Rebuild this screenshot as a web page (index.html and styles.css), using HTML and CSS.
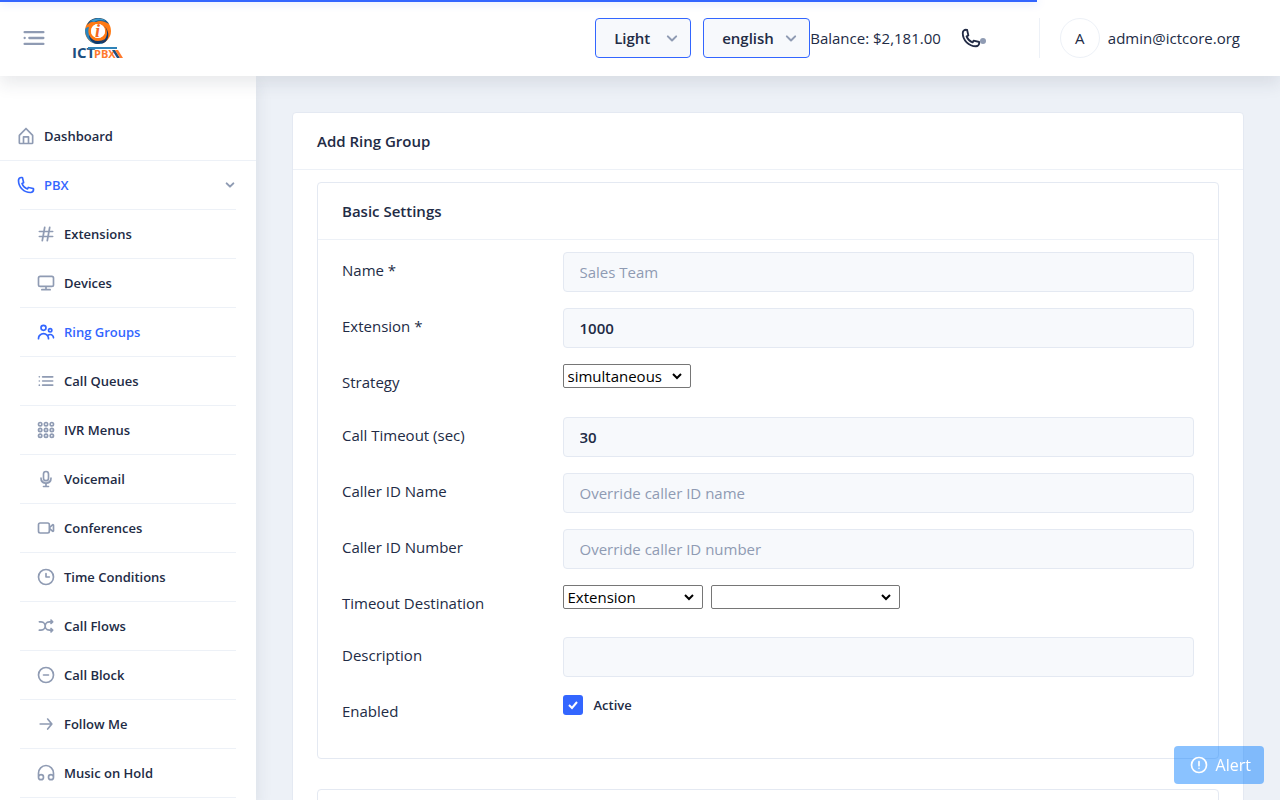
FILE: index.html
```html
<!doctype html>
<html lang="en">
<head>
  <meta charset="UTF-8">
  <meta name="viewport" content="width=device-width, initial-scale=1.0">
  <title>ICTPBX - Add Ring Group</title>
  <link rel="stylesheet" href="styles.css">
</head>
<body>
  <div class="progress"></div>
  <header class="header">
    <button class="toggle" type="button" aria-label="Toggle menu">
      <svg viewBox="0 0 24 24"><circle cx="4" cy="12" r="1"/><rect x="7" y="11" width="14" height="2" rx=".94"/><rect x="3" y="16" width="18" height="2" rx=".94"/><rect x="3" y="6" width="18" height="2" rx=".94"/></svg>
    </button>
    <a class="logo" href="#" aria-label="ICTPBX">
      <svg viewBox="0 0 52 40">
        <circle cx="25" cy="13" r="10" fill="none" stroke="#ff7a14" stroke-width="6"/>
        <path d="M14 7C16 2 20 0 25 0c5 0 9 2 11 6-5-3-9-4-13-2-4-1-6 0-9 3z" fill="#1d5b8c"/>
        <path d="M16 4c5-4 12-5 17-1-5-1-9-1-12 1-2-1-4-1-5 0z" fill="#3f9bcd"/>
        <path d="M29 6c3 2 5 5 5 9 0 5-4 9-9 11 4 0 7-1 9-4 3-5 1-12-5-16z" fill="#123a6b"/>
        <path d="M12 12c0 8 6 14 13 14 2 0 4 0 5-1-6 0-10-2-13-6-2-3-2-7-1-10-2 0-4 1-4 3z" fill="#2b85bd"/>
        <path d="M16 17c2 4 5 6 9 6 3 0 5-1 7-2-2 3-5 5-8 5-5-1-8-5-8-9z" fill="#123a6b"/>
        <circle cx="25" cy="13" r="7" fill="#fff"/>
        <text class="logo-i" x="22" y="19">i</text>
        <text class="logo-ict" x="-1" y="40">ICT</text>
        <path d="M15 29h29v2H15z" fill="#2f83b8"/>
        <text class="logo-pbx" x="21" y="40">PBX</text>
        <path d="M39 32h3l5 8h-3z" fill="#1d4f80"/>
        <path d="M42 32h3l5 8h-3z" fill="#ff7a2e"/>
      </svg>
    </a>
    <div class="tools">
      <div class="dropdown theme">
        <select aria-label="Theme"><option>Light</option></select>
        <svg viewBox="0 0 24 24"><path d="M7 10l5 5 5-5"/></svg>
      </div>
      <div class="dropdown lang">
        <select aria-label="Language"><option>english</option></select>
        <svg viewBox="0 0 24 24"><path d="M7 10l5 5 5-5"/></svg>
      </div>
      <span>Balance: $2,181.00</span>
      <button class="phone" type="button" aria-label="Phone">
        <svg viewBox="0 0 24 24"><use href="#phone"/></svg>
        <i class="dot"></i>
      </button>
      <a class="user" href="#"><span class="avatar">A</span>admin@ictcore.org</a>
    </div>
  </header>

  <div class="layout">
    <nav class="sidebar">
      <ul class="menu">
        <li>
          <a href="#"><svg viewBox="0 0 24 24"><path d="M20.42 10.18L12.71 2.3a1 1 0 0 0-1.42 0l-7.71 7.89A2 2 0 0 0 3 11.62V20a2 2 0 0 0 1.89 2h14.22A2 2 0 0 0 21 20v-8.38a2.07 2.07 0 0 0-.58-1.44zM10 20v-6h4v6zm9 0h-3v-7a1 1 0 0 0-1-1H9a1 1 0 0 0-1 1v7H5v-8.42l7-7.15 7 7.19z"/></svg>Dashboard</a>
        </li>
        <li>
          <a class="active" href="#">
            <svg viewBox="0 0 24 24"><path id="phone" d="M17.4 22A15.42 15.42 0 0 1 2 6.6 4.6 4.6 0 0 1 6.6 2a3.94 3.94 0 0 1 .77.07 3.79 3.79 0 0 1 .72.18 1 1 0 0 1 .65.75l1.37 6a1 1 0 0 1-.26.92c-.13.14-.14.15-1.37.79a9.91 9.91 0 0 0 4.87 4.89c.65-1.24.66-1.25.8-1.38a1 1 0 0 1 .92-.26l6 1.37a1 1 0 0 1 .72.65 4.34 4.34 0 0 1 .19.73 4.77 4.77 0 0 1 .06.76A4.6 4.6 0 0 1 17.4 22zM6.6 4A2.61 2.61 0 0 0 4 6.6 13.41 13.41 0 0 0 17.4 20a2.61 2.61 0 0 0 2.6-2.6v-.33L15.36 16l-.29.55c-.45.87-.78 1.5-1.62 1.16a11.85 11.85 0 0 1-7.18-7.21c-.36-.78.32-1.14 1.18-1.59L8 8.64 6.93 4z"/></svg>PBX
            <svg class="chevron" viewBox="0 0 24 24"><path d="M8 10l4 4 4-4"/></svg>
          </a>
          <ul class="submenu">
            <li><a href="#"><svg viewBox="0 0 24 24"><path d="M20 14h-4.3l.73-4H20a1 1 0 0 0 0-2h-3.21l.69-3.81A1 1 0 0 0 16.64 3a1 1 0 0 0-1.22.82L14.67 8h-3.88l.69-3.81A1 1 0 0 0 10.64 3a1 1 0 0 0-1.22.82L8.67 8H4a1 1 0 0 0 0 2h4.3l-.73 4H4a1 1 0 0 0 0 2h3.21l-.69 3.81A1 1 0 0 0 7.36 21a1 1 0 0 0 1.22-.82L9.33 16h3.88l-.69 3.81a1 1 0 0 0 .84 1.19 1 1 0 0 0 1.22-.82l.75-4.18H20a1 1 0 0 0 0-2zM9.7 14l.73-4h3.87l-.73 4z"/></svg>Extensions</a></li>
            <li><a href="#"><svg viewBox="0 0 24 24"><path d="M19 3H5a3 3 0 0 0-3 3v8a3 3 0 0 0 3 3h6v2H7a1 1 0 0 0 0 2h10a1 1 0 0 0 0-2h-4v-2h6a3 3 0 0 0 3-3V6a3 3 0 0 0-3-3zm1 11a1 1 0 0 1-1 1H5a1 1 0 0 1-1-1V6a1 1 0 0 1 1-1h14a1 1 0 0 1 1 1z"/></svg>Devices</a></li>
            <li><a class="active" href="#"><svg viewBox="0 0 24 24"><path d="M9 11a4 4 0 1 0-4-4 4 4 0 0 0 4 4zm0-6a2 2 0 1 1-2 2 2 2 0 0 1 2-2zM17 13a3 3 0 1 0-3-3 3 3 0 0 0 3 3zm0-4a1 1 0 1 1-1 1 1 1 0 0 1 1-1zM17 14a5 5 0 0 0-3.06 1.05A7 7 0 0 0 2 20a1 1 0 0 0 2 0 5 5 0 0 1 10 0 1 1 0 0 0 2 0 6.9 6.9 0 0 0-.86-3.35A3 3 0 0 1 20 19a1 1 0 0 0 2 0 5 5 0 0 0-5-5z"/></svg>Ring Groups</a></li>
            <li><a href="#"><svg viewBox="0 0 24 24"><circle cx="4" cy="7" r="1"/><circle cx="4" cy="12" r="1"/><circle cx="4" cy="17" r="1"/><rect x="7" y="11" width="14" height="2" rx=".94"/><rect x="7" y="16" width="14" height="2" rx=".94"/><rect x="7" y="6" width="14" height="2" rx=".94"/></svg>Call Queues</a></li>
            <li><a href="#"><svg class="line" viewBox="0 0 24 24"><circle cx="5" cy="5" r="2"/><circle cx="12" cy="5" r="2"/><circle cx="19" cy="5" r="2"/><circle cx="5" cy="12" r="2"/><circle cx="12" cy="12" r="2"/><circle cx="19" cy="12" r="2"/><circle cx="5" cy="19" r="2"/><circle cx="12" cy="19" r="2"/><circle cx="19" cy="19" r="2"/></svg>IVR Menus</a></li>
            <li><a href="#"><svg viewBox="0 0 24 24"><path d="M12 15a4 4 0 0 0 4-4V6a4 4 0 0 0-8 0v5a4 4 0 0 0 4 4zm-2-9a2 2 0 0 1 4 0v5a2 2 0 0 1-4 0zM19 11a1 1 0 0 0-2 0 5 5 0 0 1-10 0 1 1 0 0 0-2 0 7 7 0 0 0 6 6.92V20H8.89a.89.89 0 0 0-.89.89v.22a.89.89 0 0 0 .89.89h6.22a.89.89 0 0 0 .89-.89v-.22a.89.89 0 0 0-.89-.89H13v-2.08A7 7 0 0 0 19 11z"/></svg>Voicemail</a></li>
            <li><a href="#"><svg viewBox="0 0 24 24"><path d="M21 7.15a1.7 1.7 0 0 0-1.85.3l-2.15 2V8a3 3 0 0 0-3-3H5a3 3 0 0 0-3 3v8a3 3 0 0 0 3 3h9a3 3 0 0 0 3-3v-1.45l2.16 2a1.74 1.74 0 0 0 1.16.45 1.68 1.68 0 0 0 .69-.15 1.6 1.6 0 0 0 1-1.48V8.63A1.6 1.6 0 0 0 21 7.15zM15 16a1 1 0 0 1-1 1H5a1 1 0 0 1-1-1V8a1 1 0 0 1 1-1h9a1 1 0 0 1 1 1zm5-1.42L17.19 12 20 9.42z"/></svg>Conferences</a></li>
            <li><a href="#"><svg class="line" viewBox="0 0 24 24"><circle cx="12" cy="12" r="9"/><path d="M12 8v4h4"/></svg>Time Conditions</a></li>
            <li><a href="#"><svg viewBox="0 0 24 24"><path d="M18.71 14.29a1 1 0 0 0-1.42 1.42l.29.29H16a4 4 0 0 1 0-8h1.59l-.3.29a1 1 0 0 0 0 1.42A1 1 0 0 0 18 10a1 1 0 0 0 .71-.29l2-2A1 1 0 0 0 21 7a1 1 0 0 0-.29-.71l-2-2a1 1 0 0 0-1.42 1.42l.29.29H16a6 6 0 0 0-5 2.69A6 6 0 0 0 6 6H4a1 1 0 0 0 0 2h2a4 4 0 0 1 0 8H4a1 1 0 0 0 0 2h2a6 6 0 0 0 5-2.69A6 6 0 0 0 16 18h1.59l-.3.29a1 1 0 0 0 0 1.42A1 1 0 0 0 18 20a1 1 0 0 0 .71-.29l2-2A1 1 0 0 0 21 17a1 1 0 0 0-.29-.71z"/></svg>Call Flows</a></li>
            <li><a href="#"><svg class="line" viewBox="0 0 24 24"><circle cx="12" cy="12" r="9"/><path d="M9 12h6"/></svg>Call Block</a></li>
            <li><a href="#"><svg viewBox="0 0 24 24"><path d="M5 13h11.86l-3.63 4.36a1 1 0 0 0 1.54 1.28l5-6a1.19 1.19 0 0 0 .09-.15c0-.05.05-.08.07-.13A1 1 0 0 0 20 12a1 1 0 0 0-.07-.36c0-.05-.05-.08-.07-.13a1.19 1.19 0 0 0-.09-.15l-5-6A1 1 0 0 0 14 5a1 1 0 0 0-.64.23 1 1 0 0 0-.13 1.41L16.86 11H5a1 1 0 0 0 0 2z"/></svg>Follow Me</a></li>
            <li><a href="#"><svg viewBox="0 0 24 24"><path d="M12 2A10.2 10.2 0 0 0 2 12.37V17a4 4 0 1 0 4-4 3.91 3.91 0 0 0-2 .56v-1.19A8.2 8.2 0 0 1 12 4a8.2 8.2 0 0 1 8 8.37v1.19a3.91 3.91 0 0 0-2-.56 4 4 0 1 0 4 4v-4.63A10.2 10.2 0 0 0 12 2zM6 15a2 2 0 1 1-2 2 2 2 0 0 1 2-2zm12 4a2 2 0 1 1 2-2 2 2 0 0 1-2 2z"/></svg>Music on Hold</a></li>
            <li></li>
          </ul>
        </li>
      </ul>
    </nav>

    <main class="content">
      <form class="card">
        <h1 class="card-header">Add Ring Group</h1>
        <div class="card-body">
          <section class="card">
            <h2 class="card-header">Basic Settings</h2>
            <div class="card-body">
              <div class="row">
                <label for="name">Name *</label>
                <div class="field"><input class="input" id="name" type="text" placeholder="Sales Team"></div>
              </div>
              <div class="row">
                <label for="extension">Extension *</label>
                <div class="field"><input class="input" id="extension" type="text" value="1000"></div>
              </div>
              <div class="row">
                <label for="strategy">Strategy</label>
                <div class="field">
                  <div class="select">
                    <select id="strategy"><option>simultaneous</option></select>
                    <svg viewBox="0 0 12 12"><path d="M2 4l4 4 4-4"/></svg>
                  </div>
                </div>
              </div>
              <div class="row">
                <label for="timeout">Call Timeout (sec)</label>
                <div class="field"><input class="input" id="timeout" type="text" value="30"></div>
              </div>
              <div class="row">
                <label for="cid-name">Caller ID Name</label>
                <div class="field"><input class="input" id="cid-name" type="text" placeholder="Override caller ID name"></div>
              </div>
              <div class="row">
                <label for="cid-number">Caller ID Number</label>
                <div class="field"><input class="input" id="cid-number" type="text" placeholder="Override caller ID number"></div>
              </div>
              <div class="row">
                <label for="dest-type">Timeout Destination</label>
                <div class="field">
                  <div class="select type">
                    <select id="dest-type"><option>Extension</option></select>
                    <svg viewBox="0 0 12 12"><path d="M2 4l4 4 4-4"/></svg>
                  </div>
                  <div class="select target">
                    <select aria-label="Destination"><option></option></select>
                    <svg viewBox="0 0 12 12"><path d="M2 4l4 4 4-4"/></svg>
                  </div>
                </div>
              </div>
              <div class="row">
                <label for="description">Description</label>
                <div class="field"><input class="input" id="description" type="text"></div>
              </div>
              <div class="row">
                <label for="enabled">Enabled</label>
                <div class="field">
                  <label class="checkbox">
                    <span class="box">
                      <input id="enabled" type="checkbox" checked>
                      <svg viewBox="0 0 20 20"><path d="M6 10l3 3 5-6"/></svg>
                    </span>
                    Active
                  </label>
                </div>
              </div>
            </div>
          </section>
          <section class="card">
            <div class="card-body"></div>
          </section>
        </div>
      </form>
    </main>
  </div>

  <button class="alert" type="button">
    <svg viewBox="0 0 24 24"><circle cx="12" cy="12" r="9"/><path d="M12 8v5M12 16v0"/></svg>Alert
  </button>
</body>
</html>
```
FILE: styles.css
```css
* {
  box-sizing: border-box;
}
body {
  margin: 0;
  height: 100vh;
  overflow: hidden;
  background: #edf1f7;
  color: #222b45;
  font-family: "Open Sans", sans-serif;
  font-size: 15px;
  line-height: 24px;
}
ul {
  list-style: none;
  margin: 0;
  padding: 0;
}
a {
  color: inherit;
  text-decoration: none;
}
button {
  padding: 0;
  border: 0;
  background: none;
  font: inherit;
  cursor: pointer;
}
svg {
  display: block;
  flex: none;
  fill: currentColor;
}
.progress {
  position: fixed;
  top: 0;
  left: 0;
  z-index: 3;
  width: 81%;
  height: 2px;
  background: #3366ff;
  box-shadow: 0 0 10px #3366ff66;
}

/* header */
.header {
  position: relative;
  z-index: 2;
  display: flex;
  align-items: center;
  padding: 18px 40px 18px 20px;
  background: #fff;
  box-shadow: 0 8px 16px 0 rgba(44, 51, 73, .1);
}
.toggle {
  color: #8f9bb3;
}
.toggle svg {
  width: 28px;
  height: 28px;
}
.logo {
  margin-left: 25px;
}
.logo svg {
  width: 52px;
  height: 40px;
  overflow: visible;
}
.logo text {
  font-family: "Open Sans", sans-serif;
  font-weight: 700;
}
.logo .logo-i {
  fill: #f26522;
  font-family: "Liberation Serif", serif;
  font-size: 18px;
  font-style: italic;
}
.logo-ict {
  fill: #1d4f80;
  font-size: 15px;
}
.logo-pbx {
  fill: #ff7a2e;
  font-size: 11px;
}
.tools {
  display: flex;
  align-items: center;
  margin-left: auto;
}
.dropdown,
.select {
  display: grid;
  align-items: center;
}
.dropdown select {
  grid-area: 1 / 1;
  height: 40px;
  padding: 0 18px;
  border: 1px solid #3366ff;
  border-radius: 4px;
  background: #f7f9fc;
  color: #222b45;
  font: 600 15px/24px "Open Sans", sans-serif;
  appearance: none;
}
.dropdown svg {
  grid-area: 1 / 1;
  justify-self: end;
  width: 20px;
  margin-right: 9px;
  pointer-events: none;
}
.dropdown path,
.chevron path {
  fill: none;
  stroke: #8f9bb3;
  stroke-width: 2.4;
  stroke-linecap: round;
  stroke-linejoin: round;
}
.theme {
  width: 96px;
  margin-right: 12px;
}
.lang {
  width: 107px;
}
.phone {
  display: flex;
  align-items: center;
  margin: 0 53px 0 19px;
  color: #222b45;
}
.phone svg {
  width: 22px;
  height: 22px;
}
.dot {
  width: 6px;
  height: 6px;
  margin: 6px 0 0 -2px;
  border-radius: 50%;
  background: #8f9bb3;
}
.user {
  display: flex;
  align-items: center;
  gap: 8px;
  padding-left: 20px;
  border-left: 1px solid #edf1f7;
}
.avatar {
  width: 40px;
  height: 40px;
  border: 1px solid #edf1f7;
  border-radius: 50%;
  line-height: 38px;
  text-align: center;
}

/* sidebar */
.layout {
  display: flex;
}
.sidebar {
  flex: none;
  width: 256px;
  height: calc(100vh - 76px);
  padding-top: 36px;
  overflow: hidden;
  background: #fff;
  box-shadow: 0 8px 16px 0 rgba(44, 51, 73, .1);
  font-size: 13px;
  font-weight: 600;
  line-height: 20px;
}
.sidebar a {
  display: flex;
  align-items: center;
  gap: 8px;
  padding: 14px 16px;
}
.sidebar svg {
  width: 20px;
  height: 20px;
  color: #8f9bb3;
}
.sidebar .active,
.sidebar .active svg {
  color: #3366ff;
}
.sidebar .line {
  fill: none;
  stroke: currentColor;
  stroke-width: 2;
  stroke-linecap: round;
  stroke-linejoin: round;
}
.menu > li + li {
  border-top: 1px solid #edf1f7;
}
.sidebar .chevron {
  width: 20px;
  margin-left: auto;
}
.submenu {
  margin: 0 20px;
}
.submenu li {
  border-top: 1px solid #edf1f7;
}

/* form */
.content {
  flex: 1;
  height: calc(100vh - 76px);
  padding: 36px;
  overflow: hidden;
}
.card {
  margin-bottom: 30px;
  border: 1px solid #e4e9f2;
  border-radius: 4px;
  background: #fff;
}
.card-header {
  margin: 0;
  padding: 16px 24px;
  border-bottom: 1px solid #edf1f7;
  font-size: 15px;
  font-weight: 600;
}
.card-body {
  padding: 12px 24px;
}
.row {
  display: grid;
  grid-template-columns: repeat(12, 1fr);
  column-gap: 30px;
  margin-bottom: 16px;
}
.row > label {
  grid-column: span 3;
  padding: 7px 0;
  line-height: 1.5;
}
.field {
  grid-column: span 9;
  display: flex;
  align-items: flex-start;
  gap: 8px;
}
.input {
  width: 100%;
  height: 40px;
  padding: 7px 16px;
  border: 1px solid #e4e9f2;
  border-radius: 4px;
  background: #f7f9fc;
  color: #222b45;
  font: 600 15px/24px "Open Sans", sans-serif;
}
.input::placeholder {
  color: #8f9bb3;
  font-weight: 400;
}
.select {
  width: 128px;
}
.select select {
  grid-area: 1 / 1;
  height: 24px;
  padding: 0 4px;
  border: 1px solid #767676;
  border-radius: 2px;
  background: #fff;
  color: #000;
  font: 400 15px "Open Sans", sans-serif;
  appearance: none;
}
.select svg {
  grid-area: 1 / 1;
  justify-self: end;
  width: 12px;
  margin-right: 8px;
  fill: none;
  stroke: #000;
  stroke-width: 2;
  pointer-events: none;
}
.type {
  width: 140px;
}
.target {
  width: 189px;
}
.checkbox {
  display: flex;
  align-items: center;
  gap: 11px;
  padding-top: 2px;
  font-size: 13px;
  font-weight: 600;
  line-height: 20px;
}
.box {
  display: grid;
  width: 20px;
  height: 20px;
}
.box input {
  grid-area: 1 / 1;
  width: 20px;
  height: 20px;
  margin: 0;
  border-radius: 3px;
  background: #3366ff;
  appearance: none;
}
.box svg {
  z-index: 1;
  grid-area: 1 / 1;
  fill: none;
  stroke: #fff;
  stroke-width: 2;
  pointer-events: none;
}
.alert {
  position: fixed;
  right: 16px;
  bottom: 16px;
  z-index: 4;
  display: flex;
  align-items: center;
  gap: 7px;
  padding: 7px 13px 7px 15px;
  border-radius: 4px;
  background: rgba(0, 123, 255, .46);
  color: #fff;
  font-size: 16px;
}
.alert svg {
  width: 20px;
  fill: none;
  stroke: #fff;
  stroke-width: 2;
  stroke-linecap: round;
}
```
